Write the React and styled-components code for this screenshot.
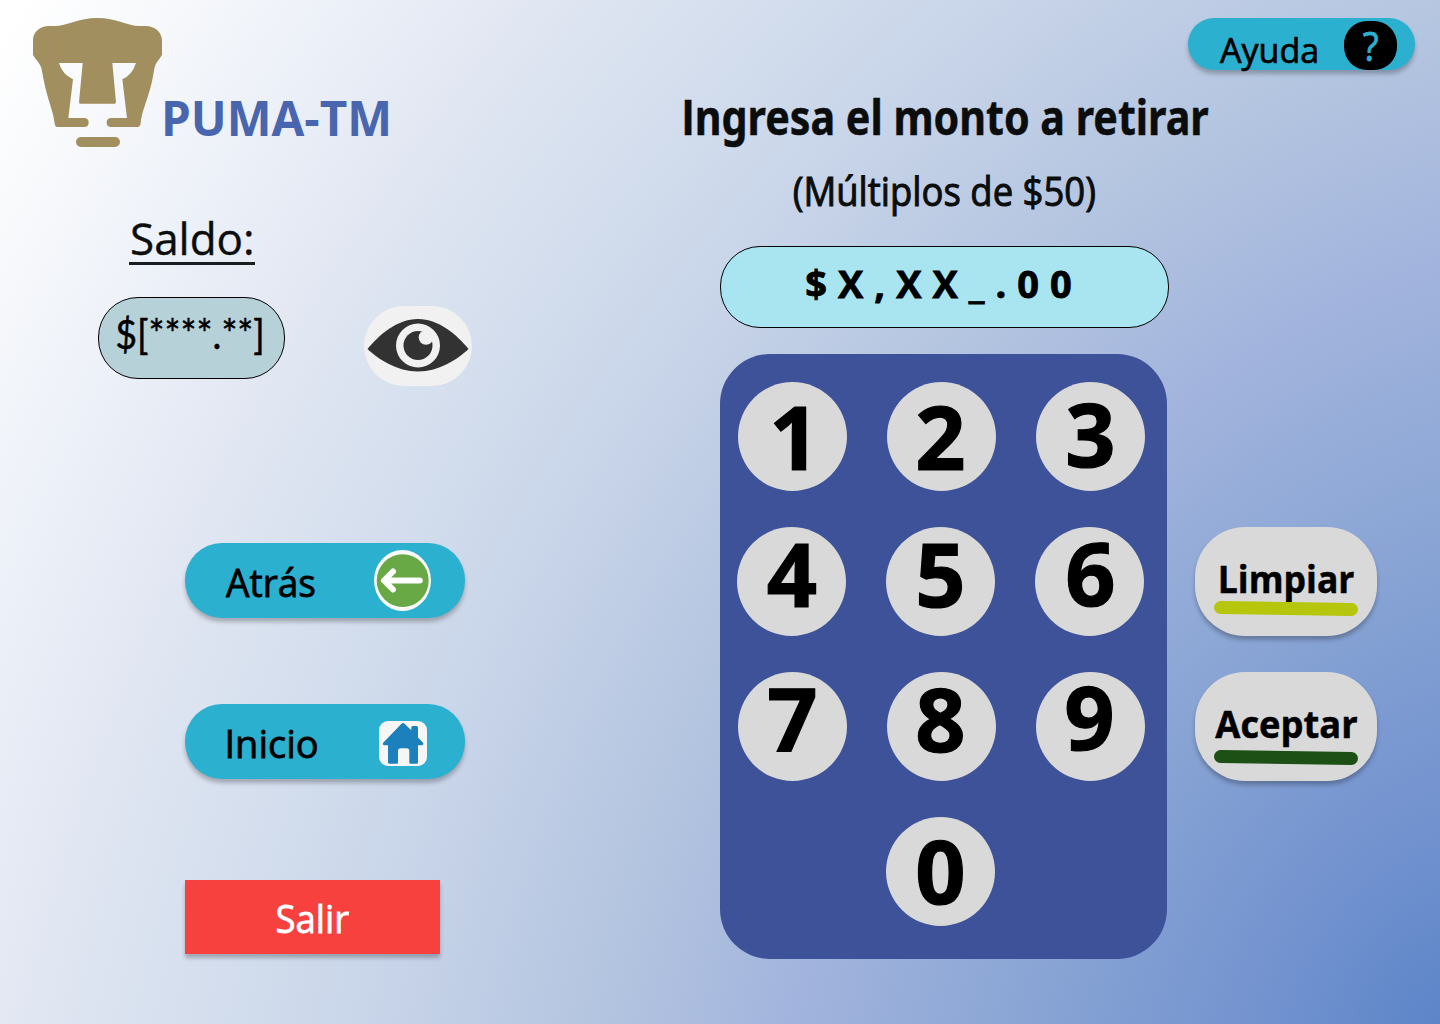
import React from "react";
import styled, { createGlobalStyle } from "styled-components";

const GlobalStyle = createGlobalStyle`
  *, *::before, *::after { box-sizing: border-box; }
  body { margin: 0; }
  button {
    border: 0;
    padding: 0;
    font: inherit;
    color: inherit;
    cursor: pointer;
  }
  svg { display: block; flex: none; }
`;

const Page = styled.div`
  position: relative;
  isolation: isolate;
  display: grid;
  grid-template-columns: 720px 720px;
  width: 1440px;
  height: 1024px;
  overflow: hidden;
  font-family: "Open Sans", "Noto Sans", sans-serif;
  color: #000;

  /* tilted elliptical glow spreading from the bottom right corner */
  &::before {
    content: "";
    position: absolute;
    z-index: -1;
    right: -2200px;
    bottom: -2200px;
    width: 4400px;
    height: 4400px;
    transform: rotate(29.5deg);
    background: radial-gradient(
      610px 837px at center,
      #5c85c8 0%,
      #7292cf 26.7%,
      #8ba6d5 66.7%,
      #a2b4dd 100%,
      #b3c4e0 129%,
      #c9d5e9 167%,
      #d5dfee 194%,
      #e3e8f3 222%,
      #ecf0f8 242%,
      #f6f8fb 264%,
      #ffffff 286%
    );
  }
`;

/* One line of text; $stretch condenses the face, $stroke thickens its stems. */
const Label = styled.span`
  flex: none;
  font-family: ${(p) => p.$face || "inherit"};
  font-size: ${(p) => p.$size}px;
  font-weight: ${(p) => (p.$bold ? 700 : 400)};
  line-height: 1;
  white-space: nowrap;
  letter-spacing: ${(p) => p.$tracking || 0}px;
  -webkit-text-stroke: ${(p) => p.$stroke || 0}px currentColor;
  transform: translate(${(p) => p.$dx || 0}px, ${(p) => p.$dy || 0}px)
    scaleX(${(p) => p.$stretch || 1});
  transform-origin: ${(p) => p.$origin || "center"};
`;

/* Capital I without slab serifs. */
const PlainCapital = styled.span`
  font-family: "Open Sans", sans-serif;
`;

/* ---------- left side ---------- */

const Sidebar = styled.aside`
  display: flex;
  flex-direction: column;
  align-items: flex-start;
  padding-top: 18px;
`;

const Brand = styled.header`
  display: flex;
  height: 129px;
  padding-left: 33px;
`;

const BrandName = styled.h1`
  margin: 76px 0 0 -1px;
  font-size: 48px;
  font-weight: 700;
  line-height: 1;
  white-space: nowrap;
  color: #4865ae;
  transform: scaleX(0.99);
  transform-origin: left;
`;

const BalanceTitle = styled.h2`
  display: flex;
  width: 126px;
  height: 50px;
  margin: 68px 0 0 129px;
  padding-left: 1px;
  border-bottom: 3px solid #1b1e20;
  color: #0b0d0d;
`;

const BalanceRow = styled.div`
  display: flex;
  align-items: flex-start;
  margin: 32px 0 0 98px;
`;

const Pill = styled.div`
  display: flex;
  align-items: center;
  justify-content: center;
  width: ${(p) => p.$width}px;
  height: 82px;
  border: 1px solid #000;
  border-radius: 40px;
  background: ${(p) => p.$color};
`;

const RevealButton = styled.button`
  display: grid;
  place-items: center;
  width: 108px;
  height: 80px;
  margin: 9px 0 0 79px;
  border-radius: 40px;
  background: #f1f1f1;
`;

const Nav = styled.nav`
  display: flex;
  flex-direction: column;
  gap: 86px;
  margin: 157px 0 0 185px;
`;

const NavButton = styled.button`
  display: flex;
  align-items: center;
  justify-content: space-between;
  width: 280px;
  height: 75px;
  padding: 0 ${(p) => p.$end}px 0 ${(p) => p.$start}px;
  border-radius: 37px;
  background: #2bb0cf;
  box-shadow: 0 4px 4px rgba(0, 0, 0, 0.25);
`;

const HomeTile = styled.span`
  display: block;
  width: 48px;
  height: 45px;
  margin-top: 4px;
  border-radius: 9px;
  background: #f6f6f6;
`;

const ExitButton = styled.button`
  display: flex;
  align-items: center;
  justify-content: center;
  width: 255px;
  height: 74px;
  margin: 101px 0 0 185px;
  background: #f6413f;
  color: #fff;
  box-shadow: 0 4px 4px rgba(0, 0, 0, 0.25);
`;

/* ---------- right side ---------- */

const Main = styled.main`
  display: flex;
  flex-direction: column;
  padding-top: 18px;
`;

const HelpButton = styled.button`
  display: flex;
  align-self: flex-end;
  justify-content: space-between;
  align-items: center;
  width: 227px;
  height: 52px;
  margin-right: 25px;
  padding: 0 18px 0 32px;
  border-radius: 26px;
  background: #2bb0cf;
  box-shadow: 0 4px 4px rgba(0, 0, 0, 0.25);
`;

const HelpMark = styled.span`
  display: flex;
  align-items: center;
  justify-content: center;
  width: 53px;
  height: 49px;
  margin-top: 3px;
  border-radius: 23px;
  background: #000;
  color: #2bb0cf;
`;

const Workspace = styled.div`
  display: flex;
  align-items: flex-start;
  gap: 26px;
  margin-top: 21px;
`;

const AmountColumn = styled.section`
  display: flex;
  flex-direction: column;
  align-items: center;
  width: 449px;
`;

const Heading = styled.div`
  display: flex;
  flex-direction: column;
  align-items: center;
  gap: 31px;
  margin-bottom: 36px;
  color: #0b0d0d;
`;

const Keypad = styled.div`
  display: flex;
  flex-direction: column;
  align-self: flex-start;
  gap: 36px;
  width: 447px;
  height: 605px;
  margin-top: 26px;
  padding-top: 28px;
  border-radius: 50px;
  background: #3e5299;
`;

const KeyRow = styled.div`
  display: flex;
  justify-content: ${(p) => (p.$single ? "center" : "flex-start")};
  gap: 40px;
  padding-left: ${(p) => p.$inset}px;
  padding-right: ${(p) => (p.$single ? 6 : 0)}px;
`;

const Key = styled.button`
  display: flex;
  align-items: center;
  justify-content: center;
  width: 109px;
  height: 109px;
  border-radius: 50%;
  background: #d9d9d9;
`;

const Actions = styled.div`
  display: flex;
  flex-direction: column;
  gap: 36px;
  margin-top: 436px;
`;

const ActionButton = styled.button`
  display: flex;
  flex-direction: column;
  align-items: center;
  width: 182px;
  height: 109px;
  padding-top: 31px;
  border-radius: 50px;
  background: #d9d9d9;
  box-shadow: 0 4px 4px rgba(0, 0, 0, 0.25);
`;

const ActionStripe = styled.span`
  width: 144px;
  height: 13px;
  margin-top: ${(p) => p.$gap}px;
  border-radius: 7px;
  background: ${(p) => p.$color};
  transform: rotate(0.8deg);
`;

/* ---------- drawings ---------- */

const PumaLogo = () => (
  <svg width="129" height="129" viewBox="39 24 387 387" fill="#a28f60">
    <path d="M39 90C39 66 60 48 88 48L104 48C140 48 176 24 232 24C288 24 324 48 358 48L376 48C406 48 426 68 426 92L426 134C418 150 407 156 403 176C397 210 395 224 385 254C374 290 364 312 362 340Q361 351 352 351L274 351Q260 351 260 337.500Q260 324 274 324L321 324L307 208Q336 196 348 159L277 159L288 277Q288 281 284 281L181 281Q177 281 177 277L188 159L117 159Q126 192 159 208L145 324L192 324Q206 324 206 337.500Q206 351 192 351L114 351Q105 351 104 341C102 318 92 290 82 256C74 228 70 204 65 178C61 158 48 152 39 134Z" />
    <rect x="168" y="381" width="132" height="30" rx="15" />
  </svg>
);

const EyeIcon = () => (
  <svg width="108" height="80" viewBox="0 0 108 80">
    <path
      d="M3.500 43C15 29 33 13 54 13C75 13 93 29 104.500 43C94 53 75 65.500 54 65.500C33 65.500 14 53 3.500 43Z"
      fill="#323232"
    />
    <circle cx="54" cy="39.500" r="22" fill="#f1f1f1" />
    <circle cx="54" cy="39.500" r="14.500" fill="#323232" />
    <circle cx="62" cy="31.500" r="7.300" fill="#f1f1f1" />
  </svg>
);

const BackIcon = () => (
  <svg width="57" height="61" viewBox="0 0 57 61">
    <ellipse cx="28.500" cy="30.500" rx="28.500" ry="30.500" fill="#fafafa" />
    <ellipse cx="28.700" cy="30.700" rx="26" ry="26.400" fill="#68a945" />
    <path
      d="M45.800 30.500H11M19 21.500L10 30.500L19 39.500"
      fill="none"
      stroke="#fff"
      strokeWidth="6"
      strokeLinecap="round"
      strokeLinejoin="round"
    />
  </svg>
);

const HomeIcon = () => (
  <svg width="48" height="45" viewBox="0 0 48 45">
    <path
      d="M25.500 2.700L32.300 9.300V6.500Q32.300 5 33.800 5H37.500Q39 5 39 6.500V16.500L44 21.800Q45 24.200 42.500 24.200H39V41.300Q39 42.800 37.500 42.800H31.500Q30.300 42.800 30.300 41.600V30Q30.300 27.300 27.600 27.300H21.700Q19 27.300 19 30V41.600Q19 42.800 17.800 42.800H10.500Q9 42.800 9 41.300V24.200H5.500Q3 24.200 4.200 21.800L22.500 2.700Q24 1.300 25.500 2.700Z"
      fill="#1b80bb"
    />
  </svg>
);

const keyRows = [
  {
    inset: 18,
    keys: [
      { digit: "1", dx: 2, dy: -1.5 },
      { digit: "2", dx: -1, dy: -1.5 },
      { digit: "3", dx: 0, dy: -4 },
    ],
  },
  {
    inset: 17,
    keys: [
      { digit: "4", dx: 0.5, dy: -9.5 },
      { digit: "5", dx: 0, dy: -9.5 },
      { digit: "6", dx: 1, dy: -10.5 },
    ],
  },
  {
    inset: 18,
    keys: [
      { digit: "7", dx: 0, dy: -9.5 },
      { digit: "8", dx: -1, dy: -9.5 },
      { digit: "9", dx: -1, dy: -11.5 },
    ],
  },
  { inset: 0, single: true, keys: [{ digit: "0", dx: 0, dy: -2.5 }] },
];

export default function App() {
  return (
    <>
      <GlobalStyle />
      <Page>
        <Sidebar>
          <Brand>
            <PumaLogo />
            <BrandName>PUMA-TM</BrandName>
          </Brand>

          <BalanceTitle>
            <Label $size={44} $stroke={0.4} $dy={1} $origin="left">
              Saldo:
            </Label>
          </BalanceTitle>
          <BalanceRow>
            <Pill $width={187} $color="#b7d1d9">
              <Label
                $face="Lato, sans-serif"
                $size={40}
                $stroke={0.5}
                $stretch={0.94}
                $dx={-1.5}
                $dy={-4.5}
              >
                $[****.**]
              </Label>
            </Pill>
            <RevealButton aria-label="Mostrar saldo">
              <EyeIcon />
            </RevealButton>
          </BalanceRow>

          <Nav>
            <NavButton $start={41} $end={34}>
              <Label $size={38} $stroke={0.8} $stretch={0.975} $dy={1} $origin="left">
                Atrás
              </Label>
              <BackIcon />
            </NavButton>
            <NavButton $start={39.5} $end={38}>
              <Label $size={38} $stroke={0.8} $dy={0.5} $origin="left">
                Inicio
              </Label>
              <HomeTile>
                <HomeIcon />
              </HomeTile>
            </NavButton>
          </Nav>
          <ExitButton>
            <Label $size={38} $stroke={0.8} $stretch={0.96} $dy={1}>
              Salir
            </Label>
          </ExitButton>
        </Sidebar>

        <Main>
          <HelpButton>
            <Label $size={34} $stroke={0.7} $dy={5.5} $origin="left">
              Ayuda
            </Label>
            <HelpMark>
              <Label $size={40} $stroke={0.8} $stretch={0.92}>
                ?
              </Label>
            </HelpMark>
          </HelpButton>

          <Workspace>
            <AmountColumn>
              <Heading>
                <Label
                  $face='"Noto Sans", sans-serif'
                  $size={48}
                  $bold
                  $stroke={0.5}
                  $stretch={0.858}
                  $dx={0.5}
                  $dy={2}
                >
                  <PlainCapital>I</PlainCapital>ngresa el monto a retirar
                </Label>
                <Label $size={40} $stroke={1} $stretch={0.912} $dy={1}>
                  (Múltiplos de $50)
                </Label>
              </Heading>
              <Pill $width={449} $color="#a9e5f0">
                <Label $size={38} $bold $stroke={0.8} $tracking={11} $dx={-0.5} $dy={-4.5}>
                  $X,XX_.00
                </Label>
              </Pill>
              <Keypad>
                {keyRows.map((row, i) => (
                  <KeyRow key={i} $inset={row.inset} $single={row.single}>
                    {row.keys.map((k) => (
                      <Key key={k.digit}>
                        <Label $size={88} $bold $stroke={1.2} $dx={k.dx} $dy={k.dy}>
                          {k.digit}
                        </Label>
                      </Key>
                    ))}
                  </KeyRow>
                ))}
              </Keypad>
            </AmountColumn>

            <Actions>
              <ActionButton>
                <Label $size={38} $bold $stroke={0.5} $stretch={0.935} $dy={0.5}>
                  Limpiar
                </Label>
                <ActionStripe $gap={6} $color="#b6c60d" />
              </ActionButton>
              <ActionButton>
                <Label $size={38} $bold $stroke={0.5} $stretch={0.955} $dy={0.5}>
                  Aceptar
                </Label>
                <ActionStripe $gap={10} $color="#1c5014" />
              </ActionButton>
            </Actions>
          </Workspace>
        </Main>
      </Page>
    </>
  );
}
